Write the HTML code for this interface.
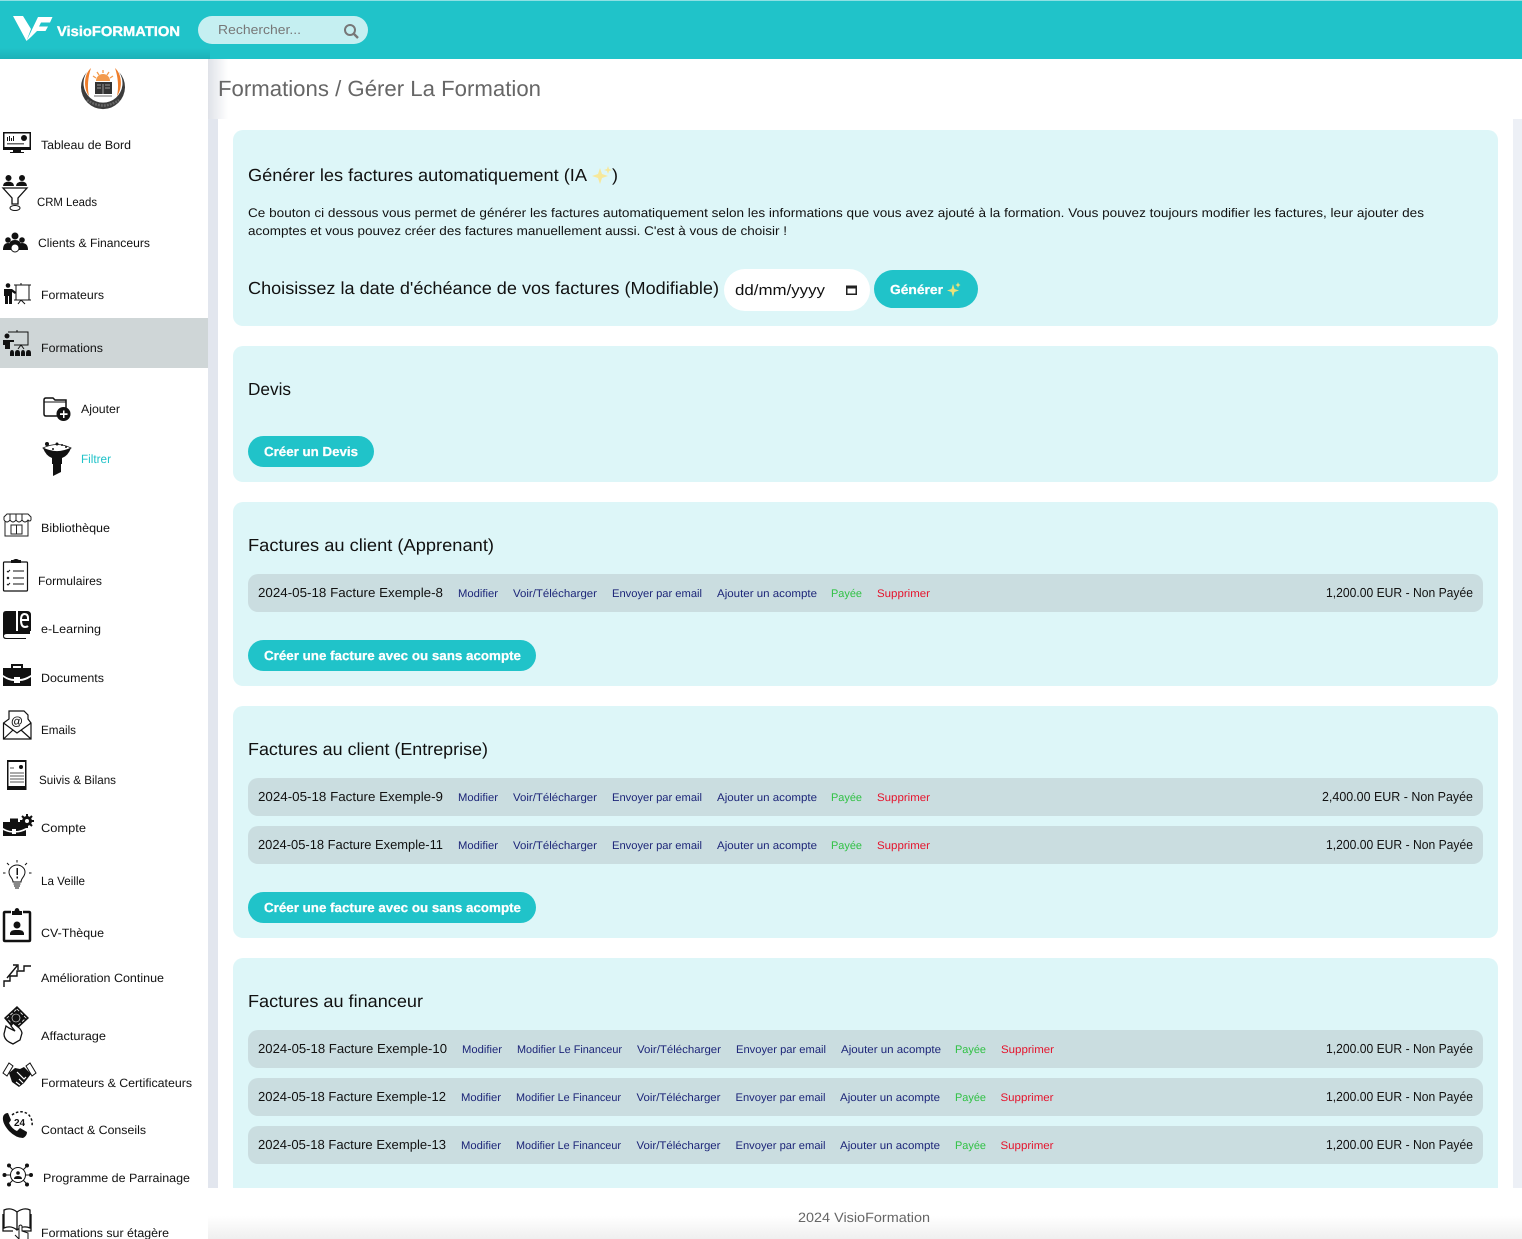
<!DOCTYPE html>
<html lang="fr">
<head>
<meta charset="utf-8">
<title>Formations / Gérer La Formation</title>
<style>
html,body{margin:0;padding:0;background:#fff;}
#p{position:relative;width:1522px;height:1239px;overflow:hidden;background:#fff;font-family:"Liberation Sans",sans-serif;}
#p div{position:absolute;}
.panel{left:233px;width:1265px;background:#ddf6f8;border-radius:10px;}
.row{left:248px;width:1235px;height:38px;background:#cadde0;border-radius:10px;}
.btn{background:#20c3c9;border-radius:19px;}
svg{position:absolute;left:0;top:0;}
text{font-family:"Liberation Sans",sans-serif;text-rendering:geometricPrecision;}
.s{font-size:12px;fill:#111;}
.h{font-size:17.5px;fill:#111;}
.t{font-size:13px;fill:#111;}
.l{font-size:11px;fill:#1c2578;}
.g{font-size:11px;fill:#2fc143;}
.r{font-size:11px;fill:#e5132c;}
.b{font-size:13px;font-weight:bold;fill:#fff;stroke:#fff;stroke-width:.25;}
</style>
</head>
<body>
<div id="p">
  <div style="left:0;top:0;width:1522px;height:59px;background:#20c3c9;"></div>
  <div style="left:0;top:0;width:1522px;height:1px;background:#8fe0e3;"></div>
  <div style="left:0;top:48px;width:210px;height:11px;background:linear-gradient(to bottom,rgba(0,60,70,0),rgba(0,60,70,.13));"></div>
  <div style="left:198px;top:16px;width:170px;height:28px;background:#c5eff1;border-radius:14px;"></div>

  <div style="left:208px;top:59px;width:20px;height:60px;background:linear-gradient(to right,#dfe2e8,#fff);"></div>
  <div style="left:208px;top:119px;width:10px;height:1070px;background:#e2e6ee;"></div>
  <div style="left:1513px;top:119px;width:9px;height:1070px;background:#edf0f6;"></div>

  <div class="panel" style="top:130px;height:196px;"></div>
  <div class="panel" style="top:346px;height:136px;"></div>
  <div class="panel" style="top:502px;height:184px;"></div>
  <div class="panel" style="top:706px;height:232px;"></div>
  <div class="panel" style="top:958px;height:240px;"></div>

  <div class="row" style="top:574px;"></div>
  <div class="row" style="top:778px;"></div>
  <div class="row" style="top:826px;"></div>
  <div class="row" style="top:1030px;"></div>
  <div class="row" style="top:1078px;"></div>
  <div class="row" style="top:1126px;"></div>

  <div style="left:724px;top:269px;width:146px;height:42px;background:#fff;border-radius:21px;"></div>
  <div class="btn" style="left:874px;top:270px;width:104px;height:38px;"></div>
  <div class="btn" style="left:248px;top:436px;width:126px;height:31px;border-radius:16px;"></div>
  <div class="btn" style="left:248px;top:640px;width:288px;height:31px;border-radius:16px;"></div>
  <div class="btn" style="left:248px;top:892px;width:288px;height:31px;border-radius:16px;"></div>

  <div style="left:208px;top:1188px;width:1314px;height:51px;background:linear-gradient(to bottom,#fff 0,#fff 55%,#efefef 100%);"></div>
  <div style="left:0;top:59px;width:208px;height:1180px;background:#fff;"></div>
  <div style="left:0;top:318px;width:208px;height:50px;background:#cfd6d7;"></div>

<svg width="1522" height="1239" viewBox="0 0 1522 1239" xmlns="http://www.w3.org/2000/svg">
  <!-- header -->
  <path d="M13 16H23L31 29L26.500 41ZM26.500 41L38 17H52.500L50 22.500H41L39 26.500H48L45.500 31H37L31 37Z" fill="#fff"/>
  <text x="57" y="36" font-size="14" font-weight="bold" fill="#fff" stroke="#fff" stroke-width=".35" textLength="123" lengthAdjust="spacingAndGlyphs">VisioFORMATION</text>
  <text x="218" y="34" font-size="13" fill="#777" textLength="83" lengthAdjust="spacingAndGlyphs">Rechercher...</text>
  <circle cx="350" cy="30" r="5" fill="none" stroke="#777" stroke-width="2"/>
  <path d="M354 34L358 38" stroke="#777" stroke-width="2.400"/>

  <!-- org logo -->
  <path d="M87 72A22 22 0 1 0 119 72A19.500 19.500 0 1 1 87 72Z" fill="#3c3c3c"/>
  <path d="M91 68C84 74 83 88 89 96C87 87 88 77 91 68ZM115 68C122 74 123 88 117 96C119 87 118 77 115 68Z" fill="#ee7d2b"/>
  <path d="M96 81A7 7 0 0 1 110 81Z" fill="#f39b4d"/>
  <path d="M103 70V73M97 72L99 75M109 72L107 75M93 76L96 78M113 76L110 78" stroke="#f39b4d" stroke-width="1.300" fill="none"/>
  <rect x="95" y="82" width="17" height="12" fill="#333"/>
  <path d="M103 84V94M97 85H101M105 85H110M97 88H101M105 88H110" stroke="#bbb" stroke-width=".8" fill="none"/>
  <path d="M94 96H112" stroke="#888" stroke-width="1.200"/>
  <path d="M87 100Q103 111 119 100" stroke="#666" stroke-width="2.500" fill="none" stroke-dasharray="2 1"/>

  <!-- title -->
  <text x="218" y="96" font-size="22" fill="#666" textLength="323" lengthAdjust="spacingAndGlyphs">Formations / Gérer La Formation</text>

  <!-- sidebar icons -->
  <g fill="#111" stroke-width="1">
    <!-- tableau -->
    <path d="M3 132H31V150H21V152H24V153H10V152H13V150H3ZM4.500 133.500V147H29.500V133.500Z" fill-rule="evenodd"/>
    <path d="M7 137h1v4h-1zM9 136h1v5h-1zM11 138h1v3h-1zM13 136h1v5h-1z"/><circle cx="24" cy="138" r="3"/><rect x="7" y="143" width="17" height="1.500" fill="#666"/>
    <!-- crm -->
    <circle cx="8.500" cy="178" r="3"/><path d="M3 186Q3 182 8.500 181.500Q14 182 14 186Z"/>
    <circle cx="22" cy="178" r="3"/><path d="M16 186Q16 182 22 181.500Q27 182 27 186Z"/>
    <path d="M3 188H27L18 198V204H12V198Z" fill="none" stroke="#111" stroke-width="1.300"/>
    <ellipse cx="15" cy="208" rx="5" ry="2.500" fill="none" stroke="#111"/>
    <!-- clients -->
    <circle cx="15" cy="236" r="3.500"/><path d="M9 246Q9 240 15 240Q21 240 21 246Z"/>
    <circle cx="8" cy="240" r="2.800"/><path d="M3 250Q3 243 8 243Q12 243 12 250Z"/>
    <circle cx="22" cy="240" r="2.800"/><path d="M18 250Q18 243 22 243Q28 243 28 250Z"/>
    <circle cx="15" cy="248" r="4" fill="#fff" stroke="#111" stroke-width="1"/>
    <!-- formateurs -->
    <circle cx="8" cy="285.500" r="2.300"/><path d="M4 289H12L16 292L15 294L12 292V304H9V296H8V304H5V296H4Z"/>
    <path d="M14 285H31M16 285V300M29 285V300M14 300H31M21 300L18 304M21 300L25 304M21 283V285" fill="none" stroke="#111" stroke-width="1"/>
    <!-- formations -->
    <circle cx="7" cy="336" r="2.500"/><path d="M3 340H14V342H10V349H5V345H3Z"/>
    <path d="M8 332H28V345H14M17 330V332M18 349L21 345L24 349" fill="none" stroke="#111" stroke-width="1"/>
    <path d="M10 356V353Q10 350 12 350Q14 350 14 353V356ZM15 356V353Q15 350 17.500 350Q20 350 20 353V356ZM21 356V353Q21 350 23 350Q25 350 25 353V356ZM26 356V353Q26 350 28.500 350Q31 350 31 353V356Z"/>
    <!-- ajouter -->
    <path d="M44 400Q44 398 46 398H53L55 400H66V408M44 400V414Q44 416 46 416H57" fill="none" stroke="#111" stroke-width="1.500"/>
    <path d="M44 402H66" stroke="#111" stroke-width="1" fill="none"/>
    <circle cx="63.500" cy="414" r="7"/><path d="M60 413.200H63V410.500H64.500V413.200H67.500V415H64.500V418H63V415H60Z" fill="#fff"/>
    <!-- filtrer -->
    <path d="M43 448Q46 456 52 458V464H53V476L61 472V464H62V458Q68 456 71 448Z"/>
    <path d="M43 448Q57 441 71 448Q57 455 43 448Z" fill="#fff" stroke="#111" stroke-width=".8"/>
    <circle cx="47" cy="444" r="2"/><circle cx="57" cy="444" r="1.500"/><circle cx="53" cy="449" r="1"/><circle cx="62" cy="445" r="1"/><circle cx="66" cy="447" r="1"/>
    <!-- biblio -->
    <path d="M4 520V517L7 514H28L31 517V520M5 521V536H28V521M4 520Q7 524 10 520Q13 524 16 520Q19 524 22 520Q25 524 28 520Q30 522 31 520M10 514V520M16 514V520M22 514V520M11 525H22V534H11ZM16.500 525V534" fill="none" stroke="#222" stroke-width="1"/>
    <!-- formulaires -->
    <rect x="3.500" y="562" width="24" height="29" rx="1" fill="none" stroke="#111" stroke-width="1.200"/>
    <path d="M11 563V560H13L15 559H17L19 560H21V563Z"/>
    <path d="M13 571H24M13 578H24M13 584H24" stroke="#111" fill="none"/><path d="M7 571l1 1 2-2M7 577l2 2M9 577l-2 2M7 584l1 1 2-2" stroke="#111" fill="none"/>
    <!-- e-learning -->
    <path d="M6 611H16V631H30V634H7Q4 634 4 636Q4 638 7 638H26V639H6Q3 639 3 636V614Q3 611 6 611Z"/>
    <path d="M18 611H27Q31 611 31 615V631H18Z"/>
    <path d="M20.500 620H28V618Q28 614 24.500 614Q21 614 21 620Q21 627 25 627Q27 627 28 626" fill="none" stroke="#fff" stroke-width="2"/>
    <!-- documents -->
    <path d="M11 668V664H23V668H31V675Q24 679 20 679V677H14V679Q9 679 3 675V668ZM13 668H21V666H13Z" fill-rule="evenodd"/>
    <path d="M3 677Q9 681 14 681V683H20V681Q25 681 31 677V686H3Z"/>
    <!-- emails -->
    <path d="M3.500 723L9 719V711H24L28 715V719L31 723V739H3.500ZM3.500 723L17 733L31 723M3.500 739L13 730M31 739L21 730" fill="none" stroke="#111" stroke-width="1.200"/>
    <text x="11" y="725" font-size="12" font-weight="bold" fill="#111">@</text>
    <!-- suivis -->
    <path d="M7 760H26.500V790H7ZM8.500 762V786H25V762Z" fill-rule="evenodd"/>
    <path d="M10 768H14M10 773H24M10 776H24M10 779H24M10 782H24" stroke="#555" fill="none"/><circle cx="21" cy="767" r="2"/>
    <!-- compte -->
    <path d="M10 822V818.500H18V822H26V828Q20 831 16 831V829H12V831Q8 831 3 828V822ZM3 830Q8 832.500 12 832.500V834H16V832.500Q21 832.500 26 830V836H3Z"/>
    <circle cx="27" cy="821" r="5"/><path d="M27 814V828M20 821H34M22 816L32 826M32 816L22 826" stroke="#111" stroke-width="2" fill="none"/><circle cx="27" cy="821" r="2" fill="#fff"/>
    <!-- la veille -->
    <path d="M13 882C13 878 9 877 9 872C9 868 13 865 17 865C21 865 25 868 25 872C25 877 21 878 21 882Z" fill="none" stroke="#111" stroke-width="1"/>
    <path d="M13.500 884H20.500M14 886H20M15 888H19" stroke="#111" fill="none"/><path d="M16.500 868H18V875H16.500ZM16.500 876.500H18V878.500H16.500Z"/>
    <path d="M17 860V862.500M7 863L9 865M27 863L25 865M3 873H5.500M29 873H31.500" stroke="#111" fill="none"/>
    <!-- cv -->
    <path d="M11 912H5Q4 912 4 913V940Q4 941 5 941H29Q30 941 30 940V913Q30 912 29 912H23" fill="none" stroke="#111" stroke-width="2.500"/>
    <path d="M12 915V911H14.500Q15 908 17 908Q19 908 19.500 911H22V915Z"/>
    <circle cx="17" cy="925" r="3.500"/><path d="M10 935V933Q11 930 15 930H19Q23 930 24 933V935Z"/>
    <!-- amelioration -->
    <path d="M4 987V981H10V976H17V971H24V966H31M7 978L17 966M13 965H18V970" fill="none" stroke="#111" stroke-width="1.400"/>
    <!-- affacturage -->
    <path d="M17 1006L29 1018L15 1031L4 1018Z"/>
    <path d="M17 1009L26 1018L15 1028L7 1018Z" fill="none" stroke="#fff" stroke-width=".8" stroke-dasharray="3 2"/>
    <circle cx="16" cy="1018" r="4" fill="#111" stroke="#fff" stroke-width=".6"/>
    <path d="M6 1026L4 1034Q4 1039 9 1042L13 1044L20 1040L22 1033Q21 1029 18 1027L13 1023L11 1026L15 1031L9 1028Z" fill="#fff" stroke="#111" stroke-width="1.300"/>
    <!-- handshake -->
    <path d="M9 1073L15 1068L20 1069L24 1067L31 1074L24 1083L19 1087L12 1082Z"/>
    <path d="M3 1073L9 1063L13 1066L7 1076ZM36 1073L30 1063L26 1066L32 1076Z" fill="#fff" stroke="#111"/>
    <path d="M17 1072L24 1079L26 1077M19 1079L23 1083M16 1082L20 1085" stroke="#fff" fill="none" stroke-width="1.200"/>
    <!-- contact -->
    <path d="M8 1113L11 1120L9 1123Q12 1129 17 1131L20 1128L27 1132Q27 1136 23 1138Q16 1138 9 1131Q2 1123 3 1117Q4 1113 8 1113Z"/>
    <path d="M12 1115Q20 1109 28 1114Q33 1119 32 1126" fill="none" stroke="#111" stroke-width="1.500" stroke-dasharray="2.500 2"/>
    <text x="14" y="1126" font-size="10" font-weight="bold" fill="#111">24</text>
    <!-- parrainage -->
    <circle cx="18" cy="1175" r="7.500" fill="none" stroke="#111"/>
    <circle cx="18" cy="1173" r="1.800"/><path d="M14 1179Q14 1176 18 1176Q22 1176 22 1179Z"/>
    <circle cx="4.500" cy="1175" r="2"/><circle cx="31" cy="1175" r="2"/><circle cx="9" cy="1165.500" r="2"/><circle cx="27" cy="1165.500" r="2"/><circle cx="9" cy="1184.500" r="2"/><circle cx="27" cy="1184.500" r="2"/>
    <path d="M6 1175H10M26 1175H30M10 1167L13 1170M26 1167L23 1170M10 1183L13 1180M26 1183L23 1180" stroke="#111" fill="none"/>
    <!-- etagere -->
    <path d="M4 1228V1210Q11 1207 17 1212Q24 1207 30 1210V1228Q23 1225 17 1230Q11 1225 4 1228ZM17 1212V1230M3 1214V1231H13M31 1214V1231H22" fill="none" stroke="#111" stroke-width="1.300"/>
    <path d="M19 1239V1226Q21 1224 22 1226V1231L28 1233V1239M15 1235L19 1239" fill="#fff" stroke="#111"/>
  </g>

  <!-- sidebar labels -->
  <text class="s" x="41" y="149" textLength="90" lengthAdjust="spacingAndGlyphs">Tableau de Bord</text>
  <text class="s" x="37" y="206" textLength="60" lengthAdjust="spacingAndGlyphs">CRM Leads</text>
  <text class="s" x="38" y="247" textLength="112" lengthAdjust="spacingAndGlyphs">Clients &amp; Financeurs</text>
  <text class="s" x="41" y="299" textLength="63" lengthAdjust="spacingAndGlyphs">Formateurs</text>
  <text class="s" x="41" y="352" textLength="62" lengthAdjust="spacingAndGlyphs">Formations</text>
  <text class="s" x="81" y="413" textLength="39" lengthAdjust="spacingAndGlyphs">Ajouter</text>
  <text class="s" x="81" y="463" textLength="30" lengthAdjust="spacingAndGlyphs" style="fill:#20c3c9">Filtrer</text>
  <text class="s" x="41" y="532" textLength="69" lengthAdjust="spacingAndGlyphs">Bibliothèque</text>
  <text class="s" x="38" y="585" textLength="64" lengthAdjust="spacingAndGlyphs">Formulaires</text>
  <text class="s" x="41" y="633" textLength="60" lengthAdjust="spacingAndGlyphs">e-Learning</text>
  <text class="s" x="41" y="682" textLength="63" lengthAdjust="spacingAndGlyphs">Documents</text>
  <text class="s" x="41" y="734" textLength="35" lengthAdjust="spacingAndGlyphs">Emails</text>
  <text class="s" x="39" y="784" textLength="77" lengthAdjust="spacingAndGlyphs">Suivis &amp; Bilans</text>
  <text class="s" x="41" y="832" textLength="45" lengthAdjust="spacingAndGlyphs">Compte</text>
  <text class="s" x="41" y="885" textLength="44" lengthAdjust="spacingAndGlyphs">La Veille</text>
  <text class="s" x="41" y="937" textLength="63" lengthAdjust="spacingAndGlyphs">CV-Thèque</text>
  <text class="s" x="41" y="982" textLength="123" lengthAdjust="spacingAndGlyphs">Amélioration Continue</text>
  <text class="s" x="41" y="1040" textLength="65" lengthAdjust="spacingAndGlyphs">Affacturage</text>
  <text class="s" x="41" y="1087" textLength="151" lengthAdjust="spacingAndGlyphs">Formateurs &amp; Certificateurs</text>
  <text class="s" x="41" y="1134" textLength="105" lengthAdjust="spacingAndGlyphs">Contact &amp; Conseils</text>
  <text class="s" x="43" y="1182" textLength="147" lengthAdjust="spacingAndGlyphs">Programme de Parrainage</text>
  <text class="s" x="41" y="1237" textLength="128" lengthAdjust="spacingAndGlyphs">Formations sur étagère</text>

  <!-- panel 1 -->
  <text class="h" x="248" y="181" textLength="339" lengthAdjust="spacingAndGlyphs">Générer les factures automatiquement (IA</text>
  <path d="M600 168L602 174L608 176L602 178L600 184L598 178L592 176L598 174ZM608 166L609 169L612 170L609 171L608 174L607 171L604 170L607 169Z" fill="#f6e89a"/>
  <text class="h" x="612" y="181" textLength="6" lengthAdjust="spacingAndGlyphs">)</text>
  <text x="248" y="217" font-size="12.500" fill="#111" textLength="1176" lengthAdjust="spacingAndGlyphs">Ce bouton ci dessous vous permet de générer les factures automatiquement selon les informations que vous avez ajouté à la formation. Vous pouvez toujours modifier les factures, leur ajouter des</text>
  <text x="248" y="235" font-size="12.500" fill="#111" textLength="539" lengthAdjust="spacingAndGlyphs">acomptes et vous pouvez créer des factures manuellement aussi. C'est à vous de choisir !</text>
  <text class="h" x="248" y="294" textLength="471" lengthAdjust="spacingAndGlyphs">Choisissez la date d'échéance de vos factures (Modifiable)</text>
  <text x="735" y="295" font-size="15" fill="#111" textLength="90" lengthAdjust="spacingAndGlyphs">dd/mm/yyyy</text>
  <path d="M846 285.500H857V295H846ZM847.500 288.500V293.500H855.500V288.500Z" fill="#222" fill-rule="evenodd"/>
  <text class="b" x="890" y="294" textLength="53" lengthAdjust="spacingAndGlyphs">Générer</text>
  <path d="M953 284L954.500 289L959 290.500L954.500 292L953 297L951.500 292L947 290.500L951.500 289ZM958 282L958.700 284L960.500 285L958.700 286L958 288L957.300 286L955.500 285L957.300 284Z" fill="#e9e27a"/>

  <!-- panel 2 -->
  <text class="h" x="248" y="395" textLength="43" lengthAdjust="spacingAndGlyphs">Devis</text>
  <text class="b" x="264" y="456" textLength="94" lengthAdjust="spacingAndGlyphs">Créer un Devis</text>

  <!-- panel 3 -->
  <text class="h" x="248" y="551" textLength="246" lengthAdjust="spacingAndGlyphs">Factures au client (Apprenant)</text>
  <text class="t" x="258" y="597" textLength="185" lengthAdjust="spacingAndGlyphs">2024-05-18 Facture Exemple-8</text>
  <text class="l" x="458" y="597" textLength="40" lengthAdjust="spacingAndGlyphs">Modifier</text>
  <text class="l" x="513" y="597" textLength="84" lengthAdjust="spacingAndGlyphs">Voir/Télécharger</text>
  <text class="l" x="612" y="597" textLength="90" lengthAdjust="spacingAndGlyphs">Envoyer par email</text>
  <text class="l" x="717" y="597" textLength="100" lengthAdjust="spacingAndGlyphs">Ajouter un acompte</text>
  <text class="g" x="831" y="597" textLength="31" lengthAdjust="spacingAndGlyphs">Payée</text>
  <text class="r" x="877" y="597" textLength="53" lengthAdjust="spacingAndGlyphs">Supprimer</text>
  <text class="t" x="1326" y="597" textLength="147" lengthAdjust="spacingAndGlyphs">1,200.00 EUR - Non Payée</text>
  <text class="b" x="264" y="660" textLength="257" lengthAdjust="spacingAndGlyphs">Créer une facture avec ou sans acompte</text>

  <!-- panel 4 -->
  <text class="h" x="248" y="755" textLength="240" lengthAdjust="spacingAndGlyphs">Factures au client (Entreprise)</text>
  <text class="t" x="258" y="801" textLength="185" lengthAdjust="spacingAndGlyphs">2024-05-18 Facture Exemple-9</text>
  <text class="l" x="458" y="801" textLength="40" lengthAdjust="spacingAndGlyphs">Modifier</text>
  <text class="l" x="513" y="801" textLength="84" lengthAdjust="spacingAndGlyphs">Voir/Télécharger</text>
  <text class="l" x="612" y="801" textLength="90" lengthAdjust="spacingAndGlyphs">Envoyer par email</text>
  <text class="l" x="717" y="801" textLength="100" lengthAdjust="spacingAndGlyphs">Ajouter un acompte</text>
  <text class="g" x="831" y="801" textLength="31" lengthAdjust="spacingAndGlyphs">Payée</text>
  <text class="r" x="877" y="801" textLength="53" lengthAdjust="spacingAndGlyphs">Supprimer</text>
  <text class="t" x="1322" y="801" textLength="151" lengthAdjust="spacingAndGlyphs">2,400.00 EUR - Non Payée</text>

  <text class="t" x="258" y="849" textLength="185" lengthAdjust="spacingAndGlyphs">2024-05-18 Facture Exemple-11</text>
  <text class="l" x="458" y="849" textLength="40" lengthAdjust="spacingAndGlyphs">Modifier</text>
  <text class="l" x="513" y="849" textLength="84" lengthAdjust="spacingAndGlyphs">Voir/Télécharger</text>
  <text class="l" x="612" y="849" textLength="90" lengthAdjust="spacingAndGlyphs">Envoyer par email</text>
  <text class="l" x="717" y="849" textLength="100" lengthAdjust="spacingAndGlyphs">Ajouter un acompte</text>
  <text class="g" x="831" y="849" textLength="31" lengthAdjust="spacingAndGlyphs">Payée</text>
  <text class="r" x="877" y="849" textLength="53" lengthAdjust="spacingAndGlyphs">Supprimer</text>
  <text class="t" x="1326" y="849" textLength="147" lengthAdjust="spacingAndGlyphs">1,200.00 EUR - Non Payée</text>
  <text class="b" x="264" y="912" textLength="257" lengthAdjust="spacingAndGlyphs">Créer une facture avec ou sans acompte</text>

  <!-- panel 5 -->
  <text class="h" x="248" y="1007" textLength="175" lengthAdjust="spacingAndGlyphs">Factures au financeur</text>

  <text class="t" x="258" y="1053" textLength="189" lengthAdjust="spacingAndGlyphs">2024-05-18 Facture Exemple-10</text>
  <text class="l" x="462" y="1053" textLength="40" lengthAdjust="spacingAndGlyphs">Modifier</text>
  <text class="l" x="517" y="1053" textLength="105" lengthAdjust="spacingAndGlyphs">Modifier Le Financeur</text>
  <text class="l" x="637" y="1053" textLength="84" lengthAdjust="spacingAndGlyphs">Voir/Télécharger</text>
  <text class="l" x="736" y="1053" textLength="90" lengthAdjust="spacingAndGlyphs">Envoyer par email</text>
  <text class="l" x="841" y="1053" textLength="100" lengthAdjust="spacingAndGlyphs">Ajouter un acompte</text>
  <text class="g" x="955" y="1053" textLength="31" lengthAdjust="spacingAndGlyphs">Payée</text>
  <text class="r" x="1001" y="1053" textLength="53" lengthAdjust="spacingAndGlyphs">Supprimer</text>
  <text class="t" x="1326" y="1053" textLength="147" lengthAdjust="spacingAndGlyphs">1,200.00 EUR - Non Payée</text>

  <text class="t" x="258" y="1101" textLength="188" lengthAdjust="spacingAndGlyphs">2024-05-18 Facture Exemple-12</text>
  <text class="l" x="461" y="1101" textLength="40" lengthAdjust="spacingAndGlyphs">Modifier</text>
  <text class="l" x="516" y="1101" textLength="105" lengthAdjust="spacingAndGlyphs">Modifier Le Financeur</text>
  <text class="l" x="636.500" y="1101" textLength="84" lengthAdjust="spacingAndGlyphs">Voir/Télécharger</text>
  <text class="l" x="735.500" y="1101" textLength="90" lengthAdjust="spacingAndGlyphs">Envoyer par email</text>
  <text class="l" x="840" y="1101" textLength="100" lengthAdjust="spacingAndGlyphs">Ajouter un acompte</text>
  <text class="g" x="955" y="1101" textLength="31" lengthAdjust="spacingAndGlyphs">Payée</text>
  <text class="r" x="1000.500" y="1101" textLength="53" lengthAdjust="spacingAndGlyphs">Supprimer</text>
  <text class="t" x="1326" y="1101" textLength="147" lengthAdjust="spacingAndGlyphs">1,200.00 EUR - Non Payée</text>

  <text class="t" x="258" y="1149" textLength="188" lengthAdjust="spacingAndGlyphs">2024-05-18 Facture Exemple-13</text>
  <text class="l" x="461" y="1149" textLength="40" lengthAdjust="spacingAndGlyphs">Modifier</text>
  <text class="l" x="516" y="1149" textLength="105" lengthAdjust="spacingAndGlyphs">Modifier Le Financeur</text>
  <text class="l" x="636.500" y="1149" textLength="84" lengthAdjust="spacingAndGlyphs">Voir/Télécharger</text>
  <text class="l" x="735.500" y="1149" textLength="90" lengthAdjust="spacingAndGlyphs">Envoyer par email</text>
  <text class="l" x="840" y="1149" textLength="100" lengthAdjust="spacingAndGlyphs">Ajouter un acompte</text>
  <text class="g" x="955" y="1149" textLength="31" lengthAdjust="spacingAndGlyphs">Payée</text>
  <text class="r" x="1000.500" y="1149" textLength="53" lengthAdjust="spacingAndGlyphs">Supprimer</text>
  <text class="t" x="1326" y="1149" textLength="147" lengthAdjust="spacingAndGlyphs">1,200.00 EUR - Non Payée</text>

  <!-- footer -->
  <text x="798" y="1222" font-size="13.500" fill="#666" textLength="132" lengthAdjust="spacingAndGlyphs">2024 VisioFormation</text>
</svg>
</div>
</body>
</html>
